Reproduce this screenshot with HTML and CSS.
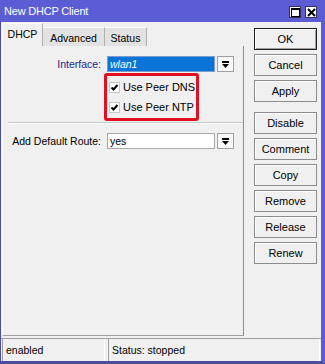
FILE: index.html
```html
<!DOCTYPE html>
<html>
<head>
<meta charset="utf-8">
<link rel="stylesheet" href="styles.css">
</head>
<body>
<div class="window">
  <div class="titlebar">
    <span class="title">New DHCP Client</span>
    <div class="tb-btns">
      <span class="tb-btn"><svg width="9" height="9" viewBox="0 0 9 9"><rect x="0.5" y="0.5" width="8" height="8" fill="none" stroke="#000"/><rect x="0" y="0" width="9" height="2" fill="#000"/></svg></span>
      <span class="tb-btn"><svg width="9" height="9" viewBox="0 0 9 9"><path d="M1 1L8 8M8 1L1 8" stroke="#000" stroke-width="2"/></svg></span>
    </div>
  </div>
  <div class="body">
    <div class="main">
      <div class="tabs">
        <div class="tab active">DHCP</div>
        <div class="tab">Advanced</div>
        <div class="tab">Status</div>
      </div>
      <div class="panel">
        <div class="row">
          <span class="lbl lbl-blue">Interface:</span>
          <div class="field selected">wlan1</div>
          <div class="dd"><svg width="7" height="7" viewBox="0 0 7 7"><rect x="0" y="0" width="7" height="2" fill="#000"/><path d="M0 3H7L3.5 7Z" fill="#000"/></svg></div>
        </div>
        <div class="checks">
          <div class="check"><span class="cb"><svg width="9" height="9" viewBox="0 0 9 9"><path d="M1.5 4.5L3.5 6.5L7.5 2" fill="none" stroke="#000" stroke-width="2"/></svg></span>Use Peer DNS</div>
          <div class="check"><span class="cb"><svg width="9" height="9" viewBox="0 0 9 9"><path d="M1.5 4.5L3.5 6.5L7.5 2" fill="none" stroke="#000" stroke-width="2"/></svg></span>Use Peer NTP</div>
        </div>
        <div class="sep"></div>
        <div class="row row-route">
          <span class="lbl">Add Default Route:</span>
          <div class="field">yes</div>
          <div class="dd"><svg width="7" height="7" viewBox="0 0 7 7"><rect x="0" y="0" width="7" height="2" fill="#000"/><path d="M0 3H7L3.5 7Z" fill="#000"/></svg></div>
        </div>
      </div>
    </div>
    <div class="buttons">
      <div class="btn default">OK</div>
      <div class="btn">Cancel</div>
      <div class="btn">Apply</div>
      <div class="btn group">Disable</div>
      <div class="btn">Comment</div>
      <div class="btn">Copy</div>
      <div class="btn">Remove</div>
      <div class="btn">Release</div>
      <div class="btn">Renew</div>
    </div>
  </div>
  <div class="statusbar">
    <div class="sf sf-left">enabled</div>
    <div class="sf sf-right">Status: stopped</div>
  </div>
</div>
</body>
</html>
```
FILE: styles.css
```css
* { box-sizing: border-box; }
html, body { margin: 0; padding: 0; background: #f0f0f0; }
body {
  font-family: "Liberation Sans", Arial, sans-serif;
  font-size: 10.5px;
  color: #000;
}
.window {
  width: 325px;
  height: 364px;
  background: #f0f0f0;
  border-left: 1px solid #4a4aa8;
  border-right: 4px solid #5c5cd4;
  border-bottom: 3px solid #4c4c9c;
  display: flex;
  flex-direction: column;
}
.titlebar {
  height: 22px;
  background: #5c5cd4;
  display: flex;
  align-items: center;
  justify-content: space-between;
  padding: 0 4px 0 2px;
  margin-right: -4px;
  margin-left: -1px;
  padding-left: 4px;
  padding-right: 8px;
}
.title {
  color: #fff;
  font-size: 11px;
  letter-spacing: -0.2px;
}
.tb-btns { display: flex; gap: 4px; margin-top: 2px; }
.tb-btn {
  width: 12px;
  height: 12px;
  background: #fff;
  border: 1px solid #303060;
  display: flex;
  align-items: center;
  justify-content: center;
}
.tb-btn svg { display: block; }
.body {
  display: flex;
  height: 316px;
}
.main {
  margin-left: 1px;
  width: 242px;
  margin-top: 1px;
}
.tabs {
  display: flex;
  align-items: flex-end;
  height: 23px;
}
.tab {
  height: 19px;
  background: #e2e2e2;
  border-top: 1px solid #fff;
  border-right: 1px solid #b0b0b0;
  display: flex;
  align-items: center;
  justify-content: center;
  padding-top: 1px;
}
.tab:nth-child(1) { width: 41px; }
.tab:nth-child(2) { width: 62px; }
.tab:nth-child(3) { width: 42px; }
.tab.active {
  height: 23px;
  background: #f0f0f0;
  border-left: 1px solid #fff;
  padding-top: 0;
  padding-bottom: 2px;
}
.panel {
  height: 290px;
  border-left: 1px solid #fff;
  border-right: 1px solid #8c8c8c;
  border-bottom: 1px solid #a0a0a0;
  padding-top: 10px;
}
.row {
  display: flex;
  align-items: center;
  height: 16px;
}
.lbl {
  width: 98px;
  text-align: right;
  white-space: nowrap;
  margin-right: 6px;
}
.lbl-blue { color: #1c1c8c; }
.field {
  width: 108px;
  height: 16px;
  background: #fff;
  border: 1px solid #a8a8a8;
  padding-left: 2px;
  line-height: 14px;
}
.field.selected {
  background: #0a74d8;
  border-color: #7a9cc8;
  color: #fff;
  font-style: italic;
}
.dd {
  width: 17px;
  height: 16px;
  margin-left: 2px;
  border: 1px solid #a0a0a0;
  background: #f8f8f8;
  display: flex;
  align-items: center;
  justify-content: center;
}
.dd svg { display: block; }
.checks {
  margin-left: 101px;
  margin-top: 1px;
  width: 95px;
  border: 3px solid #e01020;
  border-radius: 3px;
  padding: 1px 0 1px 2px;
}
.check {
  height: 20px;
  display: flex;
  align-items: center;
  white-space: nowrap;
  font-size: 11px;
}
.cb {
  width: 11px;
  height: 11px;
  background: #fff;
  border: 1px solid #c8c8c8;
  margin-right: 3px;
  display: flex;
  align-items: center;
  justify-content: center;
}
.cb svg { display: block; }
.sep {
  margin-top: 1px;
  margin-left: 5px;
  height: 2px;
  border-top: 1px solid #c8c8c8;
  border-bottom: 1px solid #fff;
}
.row-route { margin-top: 9px; }
.buttons {
  margin-left: 10px;
  margin-top: 6px;
  width: 63px;
  display: flex;
  flex-direction: column;
  gap: 4px;
}
.btn {
  height: 22px;
  border: 1px solid #8c8c8c;
  box-shadow: inset 1px 1px 0 #fff;
  background: #f0f0f0;
  display: flex;
  align-items: center;
  justify-content: center;
  font-size: 11px;
}
.btn.default {
  border: 1px solid #202020;
  box-shadow: inset 1px 1px 0 #fff, inset -1px -1px 0 #a0a0a0;
}
.btn.group { margin-top: 6px; }
.statusbar {
  height: 23px;
  border-top: 1px solid #a0a0a0;
  display: flex;
  padding-left: 1px;
  padding-right: 1px;
  gap: 3px;
}
.sf {
  height: 22px;
  display: flex;
  align-items: center;
  padding-left: 3px;
  border-left: 1px solid #a0a0a0;
  border-right: 1px solid #fff;
  white-space: nowrap;
}
.sf-left { width: 103px; }
.sf-right { flex: 1; }
```
